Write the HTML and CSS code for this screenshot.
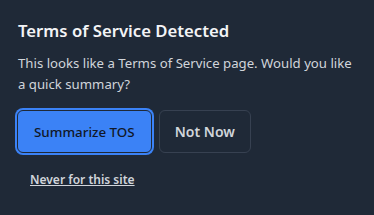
FILE: index.html
```html
<!DOCTYPE html>
<html lang="en">
<head>
  <meta charset="UTF-8">
  <title>TOS Detected</title>
  <meta name="viewport" content="width=device-width, initial-scale=1.0">
  <link rel="stylesheet" href="styles.css">
</head>
<body>
  <div class="prompt">
    <h2 class="title">Terms of Service Detected</h2>
    <p class="message">This looks like a Terms of Service page. Would you like a quick summary?</p>
    <div class="actions">
      <button class="btn primary">Summarize TOS</button>
      <button class="btn secondary">Not Now</button>
    </div>
    <a href="#" class="never">Never for this site</a>
  </div>
</body>
</html>
```

FILE: styles.css
```css
body {
  margin: 0;
  background: #1f2937;
  color: #d1d5db;
  font-family: 'Noto Sans', 'Open Sans', sans-serif;
  width: 374px;
  height: 215px;
}

.prompt {
  padding: 19px 18px;
}

.title {
  margin: 0 0 10px;
  font-size: 16.7px;
  font-weight: 600;
  line-height: 24px;
  color: #f3f4f6;
}

.message {
  margin: 0 0 15px;
  font-size: 13.2px;
  line-height: 21px;
  color: #d1d5db;
}

.actions {
  display: flex;
  gap: 7px;
  margin-bottom: 14px;
}

.btn {
  height: 43px;
  padding: 0 15px;
  border-radius: 6px;
  font-family: inherit;
  font-size: 14px;
  cursor: pointer;
}

.primary {
  margin-left: -1px;
  background: #3b82f6;
  border: 1px solid #1f2937;
  box-shadow: 0 0 0 2px #3b82f6;
  color: #111827;
  font-size: 13.4px;
  font-weight: 500;
  padding: 0 16px;
}

.secondary {
  background: transparent;
  border: 1px solid #374151;
  color: #d1d5db;
  font-weight: 600;
}

.never {
  display: inline-block;
  margin-left: 12px;
  font-size: 12px;
  font-weight: 600;
  color: #d1d5db;
}
```
